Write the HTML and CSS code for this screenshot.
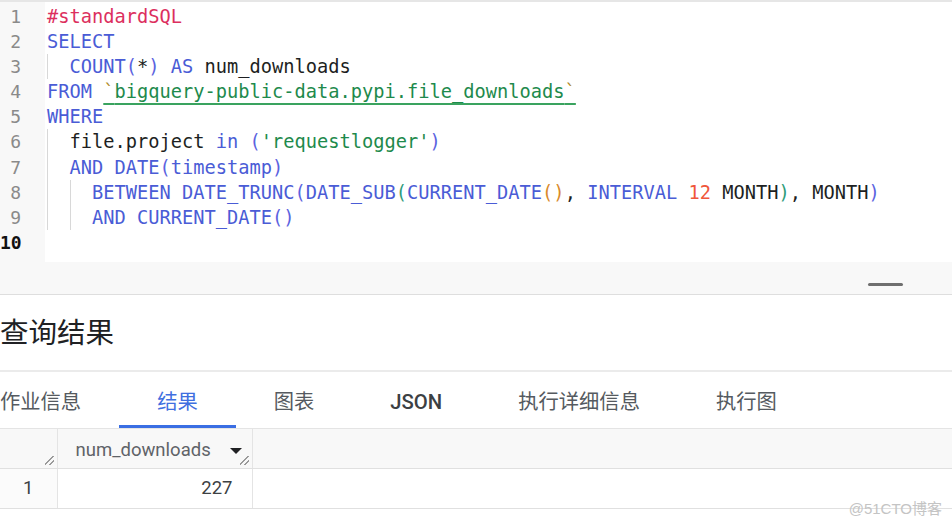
FILE: index.html
```html
<!DOCTYPE html>
<html lang="zh-CN">
<head>
    <meta charset="UTF-8">
    <title>查询结果</title>
    <link rel="stylesheet" href="styles.css">
</head>
<body>
    <!-- SQL editor -->
    <div class="editor">
        <div class="line"><span class="ln">1</span><span class="code"><span class="cm">#standardSQL</span></span></div>
        <div class="line"><span class="ln">2</span><span class="code"><span class="kw">SELECT</span></span></div>
        <div class="line"><span class="ln">3</span><span class="code"><span class="ind">  </span><span class="kw">COUNT</span><span class="p1">(</span>*<span class="p1">)</span> <span class="kw">AS</span> num_downloads</span></div>
        <div class="line"><span class="ln">4</span><span class="code"><span class="kw">FROM</span> <span class="tbl"><span class="bt">`</span>bigquery-public-data.pypi.file_downloads<span class="bt">`</span></span></span></div>
        <div class="line"><span class="ln">5</span><span class="code"><span class="kw">WHERE</span></span></div>
        <div class="line"><span class="ln">6</span><span class="code"><span class="ind">  </span>file.project <span class="kw">in</span> <span class="p1">(</span><span class="str">'requestlogger'</span><span class="p1">)</span></span></div>
        <div class="line"><span class="ln">7</span><span class="code"><span class="ind">  </span><span class="kw">AND DATE</span><span class="p1">(</span><span class="kw">timestamp</span><span class="p1">)</span></span></div>
        <div class="line"><span class="ln">8</span><span class="code"><span class="ind">  </span><span class="ind">  </span><span class="kw">BETWEEN DATE_TRUNC</span><span class="p1">(</span><span class="kw">DATE_SUB</span><span class="p2">(</span><span class="kw">CURRENT_DATE</span><span class="p3">()</span>, <span class="kw">INTERVAL</span> <span class="num">12</span> MONTH<span class="p2">)</span>, MONTH<span class="p1">)</span></span></div>
        <div class="line"><span class="ln">9</span><span class="code"><span class="ind">  </span><span class="ind">  </span><span class="kw">AND CURRENT_DATE</span><span class="p1">()</span></span></div>
        <div class="line current"><span class="ln">10</span><span class="code"></span></div>
    </div>
    <div class="editor-footer">
        <span class="handle"></span>
    </div>

    <!-- Results -->
    <section class="results">
        <h2>查询结果</h2>
        <nav class="tabs">
            <a class="tab first">作业信息</a>
            <a class="tab active">结果</a>
            <a class="tab">图表</a>
            <a class="tab latin">JSON</a>
            <a class="tab">执行详细信息</a>
            <a class="tab">执行图</a>
        </nav>
        <table class="grid">
            <colgroup>
                <col class="c-rownum">
                <col class="c-col">
                <col>
            </colgroup>
            <thead>
                <tr>
                    <th class="rownum"><span class="resize"></span></th>
                    <th class="col">
                        <span class="col-name">num_downloads</span>
                        <span class="caret"></span>
                        <span class="resize"></span>
                    </th>
                    <th class="filler"></th>
                </tr>
            </thead>
            <tbody>
                <tr>
                    <td class="rownum">1</td>
                    <td class="col value">227</td>
                    <td class="filler"></td>
                </tr>
            </tbody>
        </table>
    </section>

    <span class="watermark">@51CTO博客</span>
</body>
</html>
```

FILE: styles.css
```css
/* Base */
body {
    margin: 0;
    height: 524px;
    overflow: hidden;
    background: #ffffff;
    color: #202124;
    font-family: Roboto, "Noto Sans CJK SC", sans-serif;
    position: relative;
}

/* Editor */
.editor {
    border-top: 2px solid #e6e6e6;
    padding: 2px 0 7px;
    background: linear-gradient(to right, #f8f8f8 0, #f8f8f8 45px, #ffffff 45px);
    font-family: "DejaVu Sans Mono", monospace;
    font-size: 18.7px;
}

.line {
    display: flex;
    height: 25.1px;
    line-height: 25.1px;
    white-space: pre;
}

.ln {
    width: 21px;
    margin-right: 26px;
    text-align: right;
    color: #8a8a8a;
    font-size: 18px;
    flex-shrink: 0;
}

.current .ln {
    color: #111111;
    font-weight: bold;
}

.code {
    color: #1d1f22;
}

.ind {
    display: inline-block;
    vertical-align: top;
    height: 25.1px;
    box-shadow: inset 1px 0 0 #d8d8d8;
}

.cm { color: #dc2f5e; }
.kw { color: #4a5cd6; }
.str { color: #1e8a4c; }
.num { color: #f0573b; }
.p1 { color: #5b63e0; }
.p2 { color: #2f9c7a; }
.p3 { color: #d98a2b; }
.bt { color: #b08a2a; }

.tbl {
    color: #1e8a4c;
    text-decoration: underline;
    text-decoration-color: #3aa35f;
    text-decoration-thickness: 2px;
    text-underline-offset: 5px;
}

.editor-footer {
    height: 33px;
    background: #f8f8f8;
    border-bottom: 1px solid #dedede;
    display: flex;
    justify-content: flex-end;
    align-items: flex-end;
    padding-right: 49px;
    box-sizing: border-box;
    padding-bottom: 8px;
}

.handle {
    width: 35px;
    height: 3px;
    border-radius: 2px;
    background: #6f6f6f;
}

/* Results */
.results h2 {
    margin: 0;
    padding: 19px 0 16px;
    line-height: 40px;
    font-size: 28.5px;
    font-weight: normal;
    color: #202124;
    border-bottom: 2px solid #ebebeb;
}

.tabs {
    display: flex;
    border-bottom: 1px solid #e4e4e4;
}

.tab {
    padding: 16px 38px 9px;
    line-height: 28px;
    font-size: 20.3px;
    color: #555a60;
    border-bottom: 3px solid transparent;
}

.tab.first {
    margin-left: -38px;
}

.tab.latin {
    font-weight: 500;
    color: #3c4043;
}

.tab.active {
    color: #3f6fe0;
    border-bottom-color: #3a6ee3;
}

/* Result grid */
.grid {
    width: 100%;
    table-layout: fixed;
    border-collapse: collapse;
    font-size: 18.5px;
}

.c-rownum {
    width: 57px;
}

.c-col {
    width: 195px;
}

.grid th,
.grid td {
    height: 39px;
    padding: 0;
    border-bottom: 1px solid #e0e0e0;
}

.grid thead tr {
    background: #f8f8f8;
}

.grid th {
    position: relative;
    height: 36px;
    padding-top: 3px;
    text-align: left;
    font-weight: normal;
    color: #5f6368;
}

.grid .rownum {
    text-align: center;
    color: #3c4043;
}

.grid td.rownum {
    background: #fbfbfb;
}

.grid .col {
    border-left: 1px solid #e4e4e4;
    border-right: 1px solid #e4e4e4;
}

.col-name {
    padding-left: 18px;
}

.caret {
    position: absolute;
    right: 10px;
    top: 19px;
    width: 0;
    height: 0;
    border-left: 6px solid transparent;
    border-right: 6px solid transparent;
    border-top: 6px solid #202124;
}

.resize {
    position: absolute;
    right: 3px;
    bottom: 3px;
    width: 9px;
    height: 9px;
    background: linear-gradient(135deg, transparent 42%, #9a9a9a 42%, #9a9a9a 54%, transparent 54%, transparent 70%, #9a9a9a 70%, #9a9a9a 82%, transparent 82%);
}

.grid .value {
    text-align: right;
    padding-right: 19px;
    color: #3c4043;
}

.watermark {
    position: absolute;
    right: 10px;
    top: 497px;
    font-size: 15px;
    color: #c4c4c4;
    font-family: "Liberation Sans", "Noto Sans CJK SC", sans-serif;
}
```
